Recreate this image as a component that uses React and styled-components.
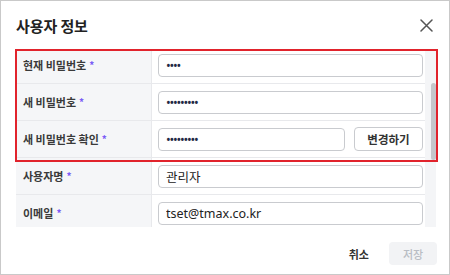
import React from 'react';
import styled, { createGlobalStyle } from 'styled-components';

const GlobalStyle = createGlobalStyle`
  body {
    margin: 0;
    font-family: "Noto Sans CJK KR", "Noto Sans", sans-serif;
    background: #ffffff;
  }
`;

const Dialog = styled.div`
  width: 450px;
  height: 275px;
  box-sizing: border-box;
  border: 1px solid #c9c9c9;
  background: #ffffff;
  display: flex;
  flex-direction: column;
`;

const Header = styled.div`
  height: 49px;
  flex-shrink: 0;
  display: flex;
  align-items: center;
  justify-content: space-between;
  padding: 0 16px 0 15px;
`;

const Title = styled.h2`
  margin: 0;
  font-size: 15px;
  font-weight: 700;
  color: #222222;
  letter-spacing: -0.1px;
`;

const CloseButton = styled.button`
  width: 14px;
  height: 14px;
  padding: 0;
  border: none;
  background: none;
  display: flex;
  align-items: center;
  justify-content: center;
  cursor: pointer;
`;

const Body = styled.div`
  position: relative;
  height: 177px;
  flex-shrink: 0;
  margin: 0 12px 0 15px;
  display: flex;
`;

const TableScroll = styled.div`
  flex: 1;
  overflow: hidden;
`;

const Rows = styled.div`
  margin-top: -3px;
`;

const Row = styled.div`
  display: grid;
  grid-template-columns: 136px 1fr;
  height: 37px;
  box-sizing: border-box;
  border-bottom: 1px solid #e8e9ec;
`;

const Label = styled.div`
  background: #f5f6f8;
  border-right: 1px solid #e8e9ec;
  padding-left: 7px;
  display: flex;
  align-items: center;
  font-size: 11px;
  font-weight: 700;
  color: #3a3a3a;
`;

const Required = styled.span`
  color: #7b5cf6;
  font-size: 10px;
  font-weight: 700;
  margin-left: 3px;
  position: relative;
  top: -1px;
`;

const Cell = styled.div`
  display: flex;
  align-items: center;
  gap: 9px;
  padding: 0 2px 0 6px;
  min-width: 0;
`;

const Input = styled.input`
  flex: 1;
  min-width: 0;
  height: 23px;
  box-sizing: border-box;
  border: 1px solid #c9cbcf;
  border-radius: 4px;
  padding: 0 7px;
  font-family: "Noto Sans", "Noto Sans CJK KR", sans-serif;
  font-size: 12.5px;
  color: ${({ type }) => (type === 'password' ? '#1f2a44' : '#222222')};
  background: #ffffff;
  outline: none;
  letter-spacing: ${({ type }) => (type === 'password' ? '-1.2px' : '0')};
`;

const SideButton = styled.button`
  width: 69px;
  height: 24px;
  flex-shrink: 0;
  box-sizing: border-box;
  border: 1px solid #c9cbcf;
  border-radius: 4px;
  background: #ffffff;
  font-family: "Noto Sans CJK KR", sans-serif;
  font-size: 11.5px;
  font-weight: 700;
  color: #333333;
  padding: 0;
`;

const ScrollTrack = styled.div`
  width: 12px;
  flex-shrink: 0;
  background: linear-gradient(to right, #f4f5f7 0 11px, #ffffff 11px);
`;

const ScrollThumb = styled.div`
  width: 5px;
  height: 77px;
  margin: 33px 0 0 6px;
  border-radius: 3px;
  background: #c5c7cb;
`;

const Highlight = styled.div`
  position: absolute;
  top: -1px;
  left: -1px;
  right: -1px;
  height: 113px;
  box-sizing: border-box;
  border: 2px solid #e1232c;
  pointer-events: none;
`;

const Footer = styled.div`
  flex: 1;
  display: flex;
  justify-content: flex-end;
  align-items: center;
  gap: 10px;
  padding: 6px 12px 0 0;
`;

const TextButton = styled.button`
  height: 23px;
  padding: 0 10px;
  border: none;
  background: none;
  font-family: "Noto Sans CJK KR", sans-serif;
  font-size: 11px;
  font-weight: 700;
  color: #333333;
`;

const SaveButton = styled.button`
  width: 48px;
  height: 23px;
  border: none;
  border-radius: 4px;
  background: #f2f3f5;
  font-family: "Noto Sans CJK KR", sans-serif;
  font-size: 11px;
  font-weight: 500;
  color: #b9bdc4;
`;

const fields = [
  { label: '현재 비밀번호', type: 'password', value: '1234' },
  { label: '새 비밀번호', type: 'password', value: '123456789' },
  { label: '새 비밀번호 확인', type: 'password', value: '123456789', action: '변경하기' },
  { label: '사용자명', type: 'text', value: '관리자' },
  { label: '이메일', type: 'text', value: 'tset@tmax.co.kr' },
];

const App = () => (
  <>
    <GlobalStyle />
    <Dialog>
      <Header>
        <Title>사용자 정보</Title>
        <CloseButton aria-label="닫기">
          <svg width="13" height="13" viewBox="0 0 13 13">
            <path d="M1 1L12 12M12 1L1 12" stroke="#555" strokeWidth="1.5" strokeLinecap="round" />
          </svg>
        </CloseButton>
      </Header>
      <Body>
        <TableScroll>
          <Rows>
            {fields.map(f => (
              <Row key={f.label}>
                <Label>
                  {f.label}
                  <Required>*</Required>
                </Label>
                <Cell>
                  <Input type={f.type} defaultValue={f.value} readOnly />
                  {f.action && <SideButton>{f.action}</SideButton>}
                </Cell>
              </Row>
            ))}
          </Rows>
        </TableScroll>
        <ScrollTrack>
          <ScrollThumb />
        </ScrollTrack>
        <Highlight />
      </Body>
      <Footer>
        <TextButton>취소</TextButton>
        <SaveButton disabled>저장</SaveButton>
      </Footer>
    </Dialog>
  </>
);

export default App;
